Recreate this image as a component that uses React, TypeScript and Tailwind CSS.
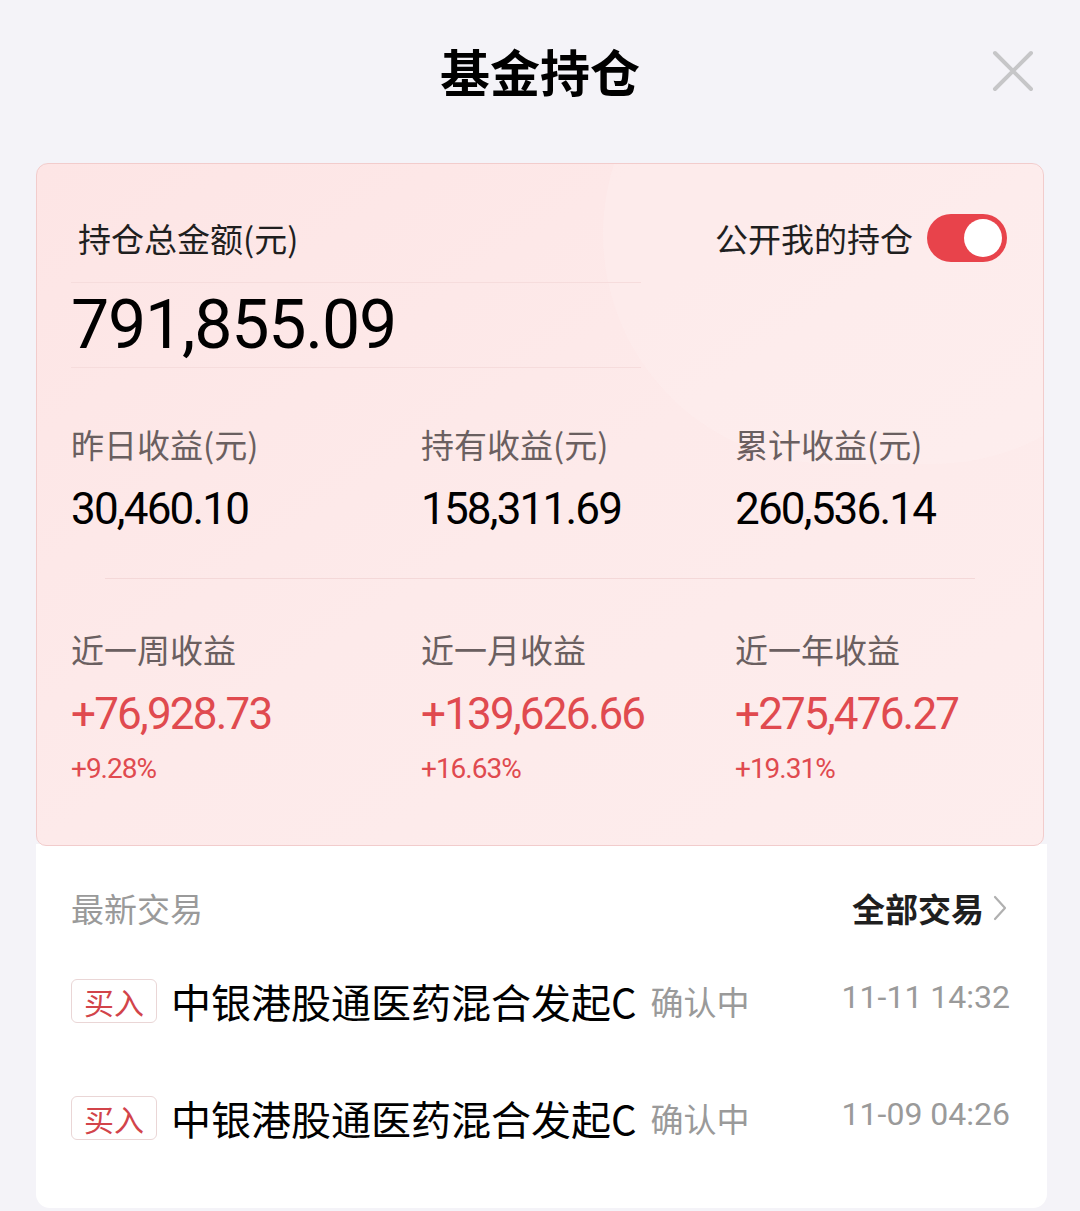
import React from 'react';

const cjk = "font-['Noto_Sans_CJK_SC','Noto_Sans',sans-serif]";
const num = "font-['Roboto','Noto_Sans_CJK_SC',sans-serif]";

const totals = [
  { label: '昨日收益(元)', value: '30,460.10' },
  { label: '持有收益(元)', value: '158,311.69' },
  { label: '累计收益(元)', value: '260,536.14' },
];

const recent = [
  { label: '近一周收益', value: '+76,928.73', pct: '+9.28%' },
  { label: '近一月收益', value: '+139,626.66', pct: '+16.63%' },
  { label: '近一年收益', value: '+275,476.27', pct: '+19.31%' },
];

const trades = [
  { name: '中银港股通医药混合发起C', status: '确认中', time: '11-11 14:32' },
  { name: '中银港股通医药混合发起C', status: '确认中', time: '11-09 04:26' },
];

function CloseIcon() {
  return (
    <svg width="42" height="42" viewBox="0 0 42 42" fill="none">
      <path d="M3 3L39 39M39 3L3 39" stroke="#c6c6c8" strokeWidth="4" strokeLinecap="round" />
    </svg>
  );
}

export default function App() {
  return (
    <div className={`min-h-screen w-[1080px] bg-[#f4f3f8] ${cjk}`}>
      {/* Header */}
      <div className="relative h-[140px] flex items-center justify-center">
        <h1 className="text-[50px] font-bold text-black leading-none">基金持仓</h1>
        <div className="absolute right-[46px] top-[50px]">
          <CloseIcon />
        </div>
      </div>

      <div className="px-[36px] pt-[23px]">
        {/* Summary card */}
        <div className="relative overflow-hidden rounded-t-[12px] rounded-b-[10px] border border-[#f2cccc] bg-gradient-to-br from-[#fde5e5] via-[#fdeaea] to-[#fdeded] px-[34px] pt-[50px] pb-[60px]">
          <div className="pointer-events-none absolute -right-[120px] -top-[160px] h-[460px] w-[560px] rounded-full bg-[#fff2f2] opacity-30" />

          <div className="relative flex items-center justify-between">
            <span className="pl-[7px] text-[33px] leading-[48px] text-[#1f1f1f]">持仓总金额(元)</span>
            <div className="flex items-center gap-[14px] pr-[2px]">
              <span className="text-[33px] leading-[48px] text-[#1f1f1f]">公开我的持仓</span>
              <div className="flex h-[48px] w-[80px] items-center justify-end rounded-full bg-[#e8434b] pr-[5px]">
                <div className="h-[38px] w-[38px] rounded-full bg-white" />
              </div>
            </div>
          </div>

          <div className="relative mt-[20px] w-[570px] border-y border-[#f6dcdc] py-[8px]">
            <div className={`${num} text-[68px] leading-[68px] tracking-[-1.2px] text-black`}>791,855.09</div>
          </div>

          <div className="relative mt-[52px] grid grid-cols-[350px_314px_1fr]">
            {totals.map((t) => (
              <div key={t.label} className="flex flex-col">
                <span className="text-[33px] leading-[48px] text-[#6a5f60]">{t.label}</span>
                <span className={`${num} mt-[16px] text-[44px] leading-[50px] tracking-[-1.8px] text-black`}>{t.value}</span>
              </div>
            ))}
          </div>

          <div className="relative mx-[34px] mt-[44px] h-px bg-[#f4d8d8]" />

          <div className="relative mt-[46px] grid grid-cols-[350px_314px_1fr]">
            {recent.map((r) => (
              <div key={r.label} className="flex flex-col">
                <span className="text-[33px] leading-[48px] text-[#6a5f60]">{r.label}</span>
                <span className={`${num} mt-[16px] text-[44px] leading-[50px] tracking-[-1.8px] text-[#e04a4f]`}>{r.value}</span>
                <span className={`${num} mt-[14px] text-[28px] leading-[32px] tracking-[-1px] text-[#e04a4f]`}>{r.pct}</span>
              </div>
            ))}
          </div>
        </div>

        {/* Recent trades */}
        <div className="-mt-[2px] rounded-b-[14px] bg-white px-[35px] pt-[40px] pb-[66px] mr-[-3px]">
          <div className="flex items-center justify-between">
            <span className="text-[33px] leading-[48px] text-[#9a9a9a]">最新交易</span>
            <div className="flex items-center gap-[8px] pr-[4px]">
              <span className="text-[33px] leading-[48px] font-bold text-[#1f1f1f]">全部交易</span>
              <svg width="16" height="28" viewBox="0 0 16 28" fill="none">
                <path d="M3 3L13 14L3 25" stroke="#b0b0b0" strokeWidth="2.2" strokeLinecap="round" strokeLinejoin="round" />
              </svg>
            </div>
          </div>

          <div className="mt-[45px] flex flex-col gap-[69px]">
            {trades.map((t, i) => (
              <div key={i} className="flex items-center">
                <span className="flex h-[44px] w-[86px] items-center justify-center rounded-[6px] border border-[#ead6d6] text-[30px] leading-none text-[#d2444a]">买入</span>
                <span className="ml-[14px] text-[40px] leading-[48px] text-black">{t.name}</span>
                <span className="ml-[14px] text-[33px] leading-[48px] text-[#9a9a9a]">{t.status}</span>
                <span className={`${num} ml-auto -mt-[8px] text-[32px] leading-[48px] text-[#9a9a9a] pr-[2px]`}>{t.time}</span>
              </div>
            ))}
          </div>
        </div>
      </div>
    </div>
  );
}
